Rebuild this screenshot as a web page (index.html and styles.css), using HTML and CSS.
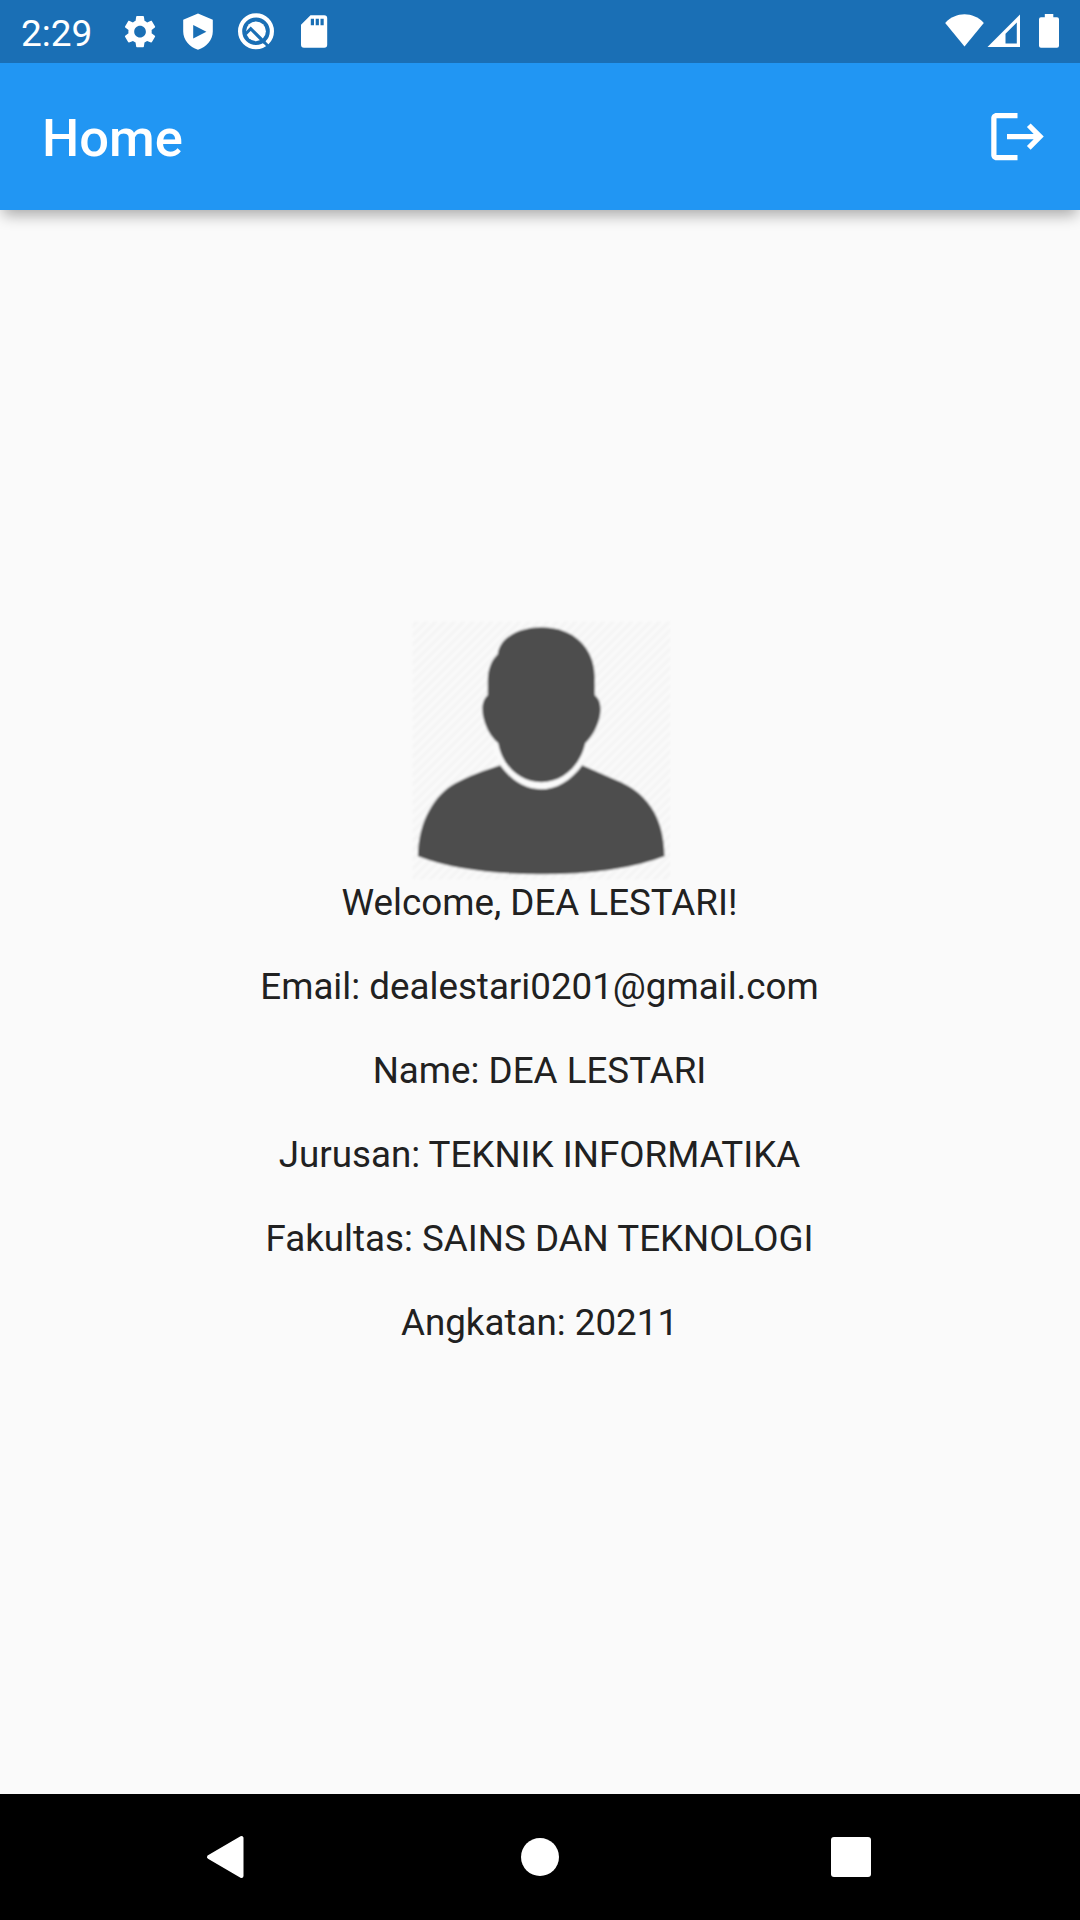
FILE: index.html
```html
<!DOCTYPE html>
<html lang="id">
<head>
<meta charset="utf-8">
<title>Home</title>
<link rel="stylesheet" href="styles.css">
</head>
<body>
<div class="screen">
  <div class="status-bar">
    <span class="clock">2:29</span>
    <svg class="status-icons" width="220" height="63" viewBox="120 0 220 63" fill="#fff">
      <path transform="translate(120.6 12.2) scale(1.62)" d="M19.14 12.94c.04-.3.06-.61.06-.94 0-.32-.02-.64-.07-.94l2.03-1.58c.18-.14.23-.41.12-.61l-1.92-3.32c-.12-.22-.37-.29-.59-.22l-2.39.96c-.5-.38-1.03-.7-1.62-.94l-.36-2.54c-.04-.24-.24-.41-.48-.41h-3.84c-.24 0-.43.17-.47.41l-.36 2.54c-.59.24-1.13.57-1.62.94l-2.39-.96c-.22-.08-.47 0-.59.22L2.74 8.87c-.12.21-.08.47.12.61l2.03 1.58c-.05.3-.09.63-.09.94s.02.64.07.94l-2.03 1.58c-.18.14-.23.41-.12.61l1.92 3.32c.12.22.37.29.59.22l2.39-.96c.5.38 1.03.7 1.62.94l.36 2.54c.05.24.24.41.48.41h3.84c.24 0 .44-.17.47-.41l.36-2.54c.59-.24 1.13-.56 1.62-.94l2.39.96c.22.08.47 0 .59-.22l1.92-3.32c.12-.22.07-.47-.12-.61l-2.01-1.58zM12 15.6c-1.98 0-3.6-1.62-3.6-3.6s1.62-3.6 3.6-3.6 3.6 1.62 3.6 3.6-1.62 3.6-3.6 3.6z"/>
      <path fill-rule="evenodd" d="M198 13.6 212.8 19.8V31.5C212.8 40 206.5 47.2 198 49.8 189.5 47.2 183.2 40 183.2 31.5V19.8ZM193.2 25V38.4L206.4 31.7Z"/>
      <circle cx="256" cy="31.3" r="15.9" fill="none" stroke="#fff" stroke-width="4.2"/>
      <circle cx="256" cy="31.3" r="9.9"/>
      <path d="M245.5 34 250.7 28.7 264.5 42.5" fill="none" stroke="#1a6fb5" stroke-width="3.2"/>
      <path d="M262 40 269 47" stroke="#1a6fb5" stroke-width="3"/>
      <path fill-rule="evenodd" d="M310.5 15.3H324.2Q327.2 15.3 327.2 18.3V44.7Q327.2 47.7 324.2 47.7H304Q301 47.7 301 44.7V24.8ZM310.8 18.7V25.3H314V18.7ZM315.7 18.7V25.3H318.9V18.7ZM320.5 18.7V25.3H323.7V18.7Z"/>
    </svg>
    <svg class="status-icons" width="125" height="63" viewBox="940 0 125 63" fill="#fff">
      <path d="M945.2 22.9C956 11.5 973 11.5 983.8 22.9L964.5 46.6Z"/>
      <path fill-rule="evenodd" d="M1020 14.6V46.9H987.5ZM1016.8 22.6 1005.5 33.7V43.5H1016.8Z"/>
      <path d="M1044.8 14H1053.3V17.3H1057Q1059 17.3 1059 19.3V45.7Q1059 47.7 1057 47.7H1041Q1039 47.7 1039 45.7V19.3Q1039 17.3 1041 17.3H1044.8Z"/>
    </svg>
  </div>
  <header class="app-bar">
    <h1 class="title">Home</h1>
    <svg class="logout" width="63" height="63" viewBox="0 0 24 24" fill="#fff">
      <path d="M17 7l-1.41 1.41L18.17 11H8v2h10.17l-2.58 2.58L17 17l5-5zM4 5h8V3H4c-1.1 0-2 .9-2 2v14c0 1.1.9 2 2 2h8v-2H4V5z"/>
    </svg>
  </header>
  <main class="content">
    <svg class="avatar" viewBox="408.75 618.75 262.5 262.5">
      <defs>
        <pattern id="hatch" width="6.6" height="6.6" patternUnits="userSpaceOnUse" patternTransform="rotate(45)">
          <rect width="6.6" height="6.6" fill="#fafafa"/>
          <rect width="3" height="6.6" fill="#f4f4f4"/>
        </pattern>
        <filter id="soft"><feGaussianBlur stdDeviation="0.8"/></filter>
      </defs>
      <g filter="url(#soft)">
        <rect x="412.5" y="621.5" width="257.5" height="258" fill="url(#hatch)"/>
        <path fill="none" stroke="#fafafa" stroke-width="13" d="M498 744C506 765 522 782 540.5 782S575 765 584 744"/>
        <path fill="#4d4d4d" d="M500 765C512 781 525 789 540.5 789S570 781 582 765L615 779.5C645 791 664 815 664.3 856Q618 874 541 874T417.7 856C418 820 435 794 455 783C468 776 484 770 500 765Z"/>
        <path fill="#4d4d4d" d="M541 627C574 627 594 648 594.5 676V695C600 699 601 706 600 714C598 726 592 736 585 743C580 766 562 782 541 782S502 766 498 743C490 736 484.5 726 482.5 714C481.5 706 482.5 699 487.5 695V681C487.5 669 491 660 497.5 654C499 638 518 627 541 627Z"/>
      </g>
    </svg>
    <p class="line">Welcome, DEA LESTARI!</p>
    <p class="line">Email: dealestari0201@gmail.com</p>
    <p class="line">Name: DEA LESTARI</p>
    <p class="line">Jurusan: TEKNIK INFORMATIKA</p>
    <p class="line">Fakultas: SAINS DAN TEKNOLOGI</p>
    <p class="line">Angkatan: 20211</p>
  </main>
  <nav class="nav-bar">
    <svg width="1080" height="126" viewBox="0 0 1080 126" fill="#fff">
      <path stroke="#fff" stroke-width="4" stroke-linejoin="round" d="M209 63 241.5 44V82Z"/>
      <circle cx="540" cy="63" r="19"/>
      <rect x="831" y="43" width="40" height="40" rx="3"/>
    </svg>
  </nav>
</div>
</body>
</html>
```
FILE: styles.css
```css
* { box-sizing: border-box; margin: 0; padding: 0; }
body { font-family: Roboto, sans-serif; background: #fafafa; }
svg { display: block; flex: none; }
.screen { width: 1080px; height: 1920px; display: flex; flex-direction: column; overflow: hidden; background: #fafafa; }
.status-bar { position: relative; z-index: 1; height: 63px; flex: none; display: flex; align-items: center; background: #1a6fb5; padding-right: 15px; }
.clock { width: 120px; padding: 3px 0 0 21px; font-size: 37px; line-height: 43px; color: #fff; }
.status-icons + .status-icons { margin-left: auto; }
.app-bar { height: 147px; flex: none; display: flex; align-items: center; justify-content: space-between; padding: 0 31.5px 0 42px; background: #2196f3; box-shadow: 0 8px 14px -3px rgba(0,0,0,.33); }
.title { padding-top: 2px; font-size: 52.5px; font-weight: 500; line-height: 62px; color: #fff; }
.content { flex: 1; display: flex; flex-direction: column; align-items: center; justify-content: center; }
.avatar { width: 262.5px; height: 262.5px; }
.line { padding: 1px 1px 0 0; font-size: 36.75px; line-height: 42px; margin-bottom: 41px; color: #212121; white-space: nowrap; }
.nav-bar { height: 126px; flex: none; background: #000; }
```
